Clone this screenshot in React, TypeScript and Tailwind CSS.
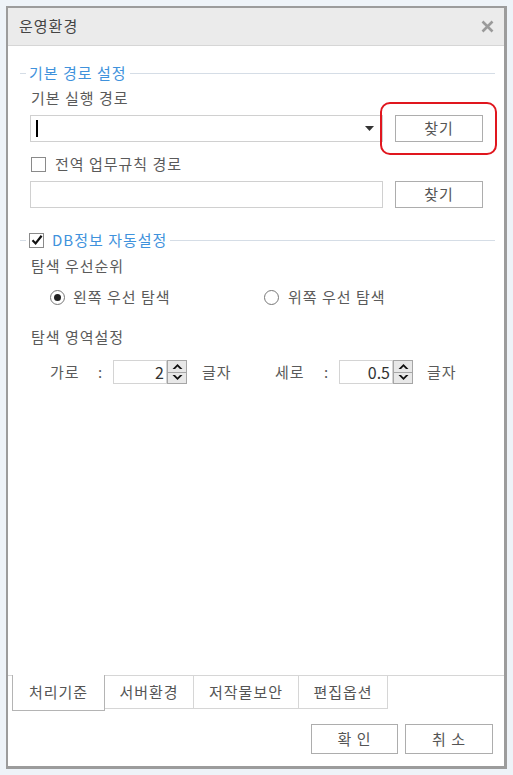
import type { ReactNode } from "react";

const font = {
  fontFamily: '"Noto Sans CJK KR", "Noto Sans", sans-serif',
};

/* =====================================================
   Small UI Helpers
===================================================== */

function Legend({ children }: { children: ReactNode }) {
  return (
    <div className="flex h-[20px] items-center">
      <div className="h-px w-[6px] bg-[#d5dde6]" />
      <div className="flex items-center gap-[8px] px-[3px]">{children}</div>
      <div className="h-px flex-1 bg-[#d5dde6]" />
    </div>
  );
}

function Check({ checked }: { checked?: boolean }) {
  return (
    <span className="flex h-[15px] w-[15px] items-center justify-center border border-[#8a8a8a] bg-white">
      {checked && (
        <svg width="12" height="12" viewBox="0 0 12 12">
          <path
            d="M1.5 6.2 L4.6 9.4 L10.6 1.8"
            fill="none"
            stroke="#111"
            strokeWidth="2.2"
          />
        </svg>
      )}
    </span>
  );
}

function Radio({ checked }: { checked?: boolean }) {
  return (
    <span className="flex h-[15px] w-[15px] items-center justify-center rounded-full border border-[#777] bg-white">
      {checked && <span className="h-[7px] w-[7px] rounded-full bg-[#222]" />}
    </span>
  );
}

function Btn({ label, className = "" }: { label: string; className?: string }) {
  return (
    <div
      className={`flex items-center justify-center border border-[#adadad] bg-white text-[15px] text-[#555] ${className}`}
    >
      {label}
    </div>
  );
}

function Spin({ value }: { value: string }) {
  return (
    <div className="flex h-[24px]">
      <div className="flex w-[54px] items-center justify-end border border-[#d4d4d4] bg-white pr-[2px] text-[16px] tracking-normal text-[#333]">
        {value}
      </div>
      <div className="flex w-[20px] flex-col border border-[#a6a6a6] bg-[#e8e8e8]">
        <div className="flex flex-1 items-center justify-center border-b border-[#a6a6a6]">
          <svg width="11" height="7" viewBox="0 0 11 7">
            <path d="M0.5 6 L5.5 1 L10.5 6 L8 6 L5.5 3.6 L3 6 Z" fill="#111" />
          </svg>
        </div>
        <div className="flex flex-1 items-center justify-center">
          <svg width="11" height="7" viewBox="0 0 11 7">
            <path d="M0.5 1 L5.5 6 L10.5 1 L8 1 L5.5 3.4 L3 1 Z" fill="#111" />
          </svg>
        </div>
      </div>
    </div>
  );
}

export default function App() {
  return (
    <div
      className="h-[775px] w-[513px] bg-[#eef3f8] pl-[6px] pt-[6px] tracking-[1px]"
      style={font}
    >
      <div className="flex h-[763px] w-[501px] flex-col border-2 border-b-[3px] border-r-[3px] border-[#9c9c9c] bg-white">
        {/* title bar */}
        <div className="flex h-[38px] items-center justify-between border-b border-[#d6d6d6] bg-[#ebebeb] pl-[11px] pr-[10px]">
          <span className="text-[15px] text-[#444]">운영환경</span>
          <svg width="13" height="13" viewBox="0 0 13 13">
            <path d="M1.5 1.5 L11.5 11.5 M11.5 1.5 L1.5 11.5" stroke="#9a9a9a" strokeWidth="2.6" />
          </svg>
        </div>

        {/* content */}
        <div className="flex-1 pl-[12px] pr-[9px] text-[15px] text-[#5a5a5a]">
          <div className="mt-[17px]">
            <Legend>
              <span className="text-[#3f92dc]">기본 경로 설정</span>
            </Legend>
          </div>

          <div className="mt-[5px] h-[20px] pl-[11px] leading-[20px]">기본 실행 경로</div>

          <div className="mt-[7px] flex pl-[10px]">
            <div className="flex h-[27px] w-[353px] items-center justify-between border border-[#d0d0d0] pl-[5px] pr-[8px]">
              <span className="h-[17px] w-[2px] bg-black" />
              <svg width="9" height="5" viewBox="0 0 9 5">
                <path d="M0 0 L9 0 L4.5 5 Z" fill="#333" />
              </svg>
            </div>
            <div className="relative ml-[12px]">
              <Btn label="찾기" className="h-[27px] w-[88px]" />
              <div className="absolute -bottom-[13px] -left-[15px] -right-[14px] -top-[13px] rounded-[10px] border-[2.5px] border-[#e0161e]" />
            </div>
          </div>

          <div className="mt-[12px] flex h-[20px] items-center gap-[9px] pl-[11px]">
            <Check />
            <span>전역 업무규칙 경로</span>
          </div>

          <div className="mt-[7px] flex pl-[10px]">
            <div className="h-[27px] w-[353px] border border-[#d0d0d0]" />
            <Btn label="찾기" className="ml-[12px] h-[27px] w-[88px]" />
          </div>

          <div className="mt-[22px]">
            <Legend>
              <Check checked />
              <span className="text-[#3f92dc]">DB정보 자동설정</span>
            </Legend>
          </div>

          <div className="mt-[6px] h-[20px] pl-[11px] leading-[20px]">탐색 우선순위</div>

          <div className="mt-[11px] flex h-[20px] items-center pl-[30px]">
            <div className="flex w-[214px] items-center gap-[8px]">
              <Radio checked />
              <span>왼쪽 우선 탐색</span>
            </div>
            <div className="flex items-center gap-[9px]">
              <Radio />
              <span>위쪽 우선 탐색</span>
            </div>
          </div>

          <div className="mt-[20px] h-[20px] pl-[11px] leading-[20px]">탐색 영역설정</div>

          <div className="mt-[13px] flex items-center pl-[30px]">
            <span className="w-[48px]">가로</span>
            <span className="w-[15px]">:</span>
            <Spin value="2" />
            <span className="ml-[15px] w-[73px]">글자</span>
            <span className="w-[49px]">세로</span>
            <span className="w-[15px]">:</span>
            <Spin value="0.5" />
            <span className="ml-[14px]">글자</span>
          </div>
        </div>

        {/* tabs */}
        <div className="flex h-[36px] border-t border-[#d6d6d6] pl-[4px] text-[15px] text-[#555]">
          <div className="-mt-px flex h-[36px] w-[93px] items-center justify-center border border-t-0 border-[#b4b4b4] bg-white">
            처리기준
          </div>
          <div className="flex h-[33px] w-[89px] items-center justify-center border-b border-r border-[#d6d6d6]">
            서버환경
          </div>
          <div className="flex h-[33px] w-[105px] items-center justify-center border-b border-r border-[#d6d6d6]">
            저작물보안
          </div>
          <div className="flex h-[33px] w-[89px] items-center justify-center border-b border-r border-[#d6d6d6]">
            편집옵션
          </div>
        </div>

        {/* footer */}
        <div className="flex h-[55px] justify-end gap-[7px] pr-[11px] pt-[13px]">
          <Btn label="확 인" className="h-[30px] w-[87px]" />
          <Btn label="취 소" className="h-[30px] w-[88px]" />
        </div>
      </div>
    </div>
  );
}
